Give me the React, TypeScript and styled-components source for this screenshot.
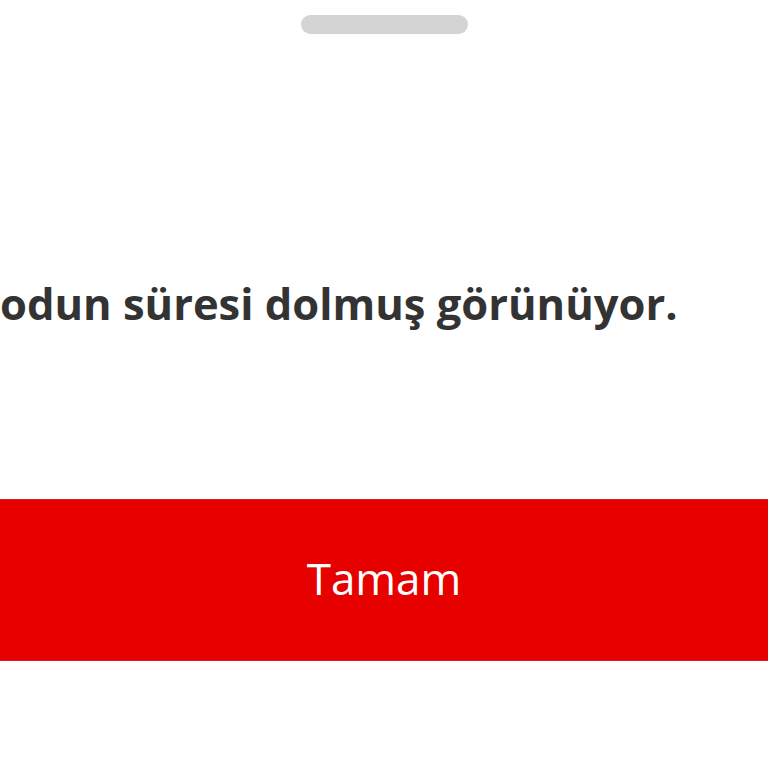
import React from 'react';
import styled, { createGlobalStyle } from 'styled-components';

const GlobalStyle = createGlobalStyle`
  html, body {
    margin: 0;
    padding: 0;
    background: #ffffff;
  }
  body {
    font-family: 'Open Sans', 'Liberation Sans', sans-serif;
  }
`;

const Sheet = styled.div`
  width: 768px;
  height: 768px;
  overflow: hidden;
  background: #ffffff;
  display: flex;
  flex-direction: column;
`;

const HandleRow = styled.div`
  display: flex;
  justify-content: center;
  padding-top: 15px;
`;

const Handle = styled.div`
  width: 167px;
  height: 19px;
  border-radius: 10px;
  background: #d4d4d4;
`;

const Message = styled.p`
  margin: 240px 0 0 0;
  font-size: 43.5px;
  line-height: 60px;
  font-weight: 700;
  color: #333333;
  white-space: nowrap;
`;

const ConfirmButton = styled.button`
  margin-top: 165px;
  width: 100%;
  height: 162px;
  border: none;
  border-top: 1px solid #c8262b;
  border-bottom: 1px solid #c8262b;
  background: #e60000;
  color: #ffffff;
  font-family: 'Open Sans', 'Liberation Sans', sans-serif;
  font-size: 44px;
  font-weight: 400;
  cursor: pointer;
  padding: 0 0 4px 0;
`;

const App: React.FC = () => {
  return (
    <>
      <GlobalStyle />
      <Sheet>
        <HandleRow>
          <Handle />
        </HandleRow>
        <Message>odun süresi dolmuş görünüyor.</Message>
        <ConfirmButton>Tamam</ConfirmButton>
      </Sheet>
    </>
  );
};

export default App;
